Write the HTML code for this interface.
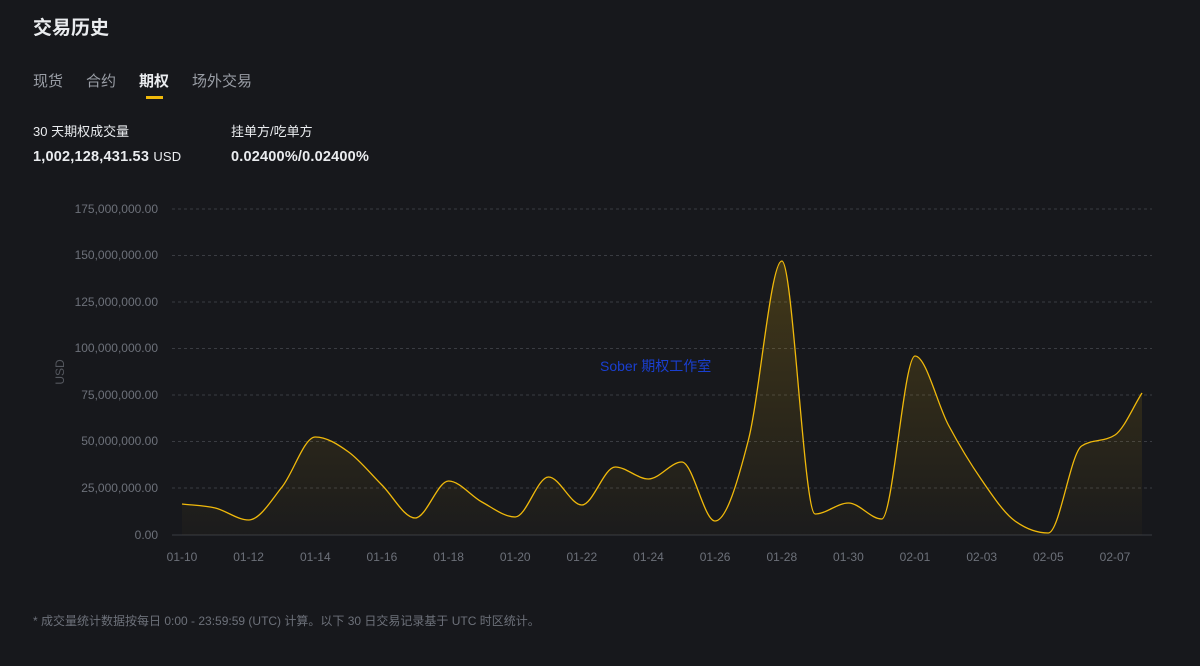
<!DOCTYPE html>
<html><head><meta charset="utf-8"><style>
html,body{margin:0;padding:0;background:#17181c;width:1200px;height:666px;overflow:hidden;font-family:"Liberation Sans","Noto Sans CJK SC",sans-serif;color:#eaecef}
.abs{position:absolute;white-space:nowrap}
</style></head><body>
<div class="abs" style="left:33px;top:13px;font-size:19px;font-weight:bold;color:#eaecef">交易历史</div>
<div class="abs" style="left:33px;top:70px;font-size:15px;color:#9a9ea6">现货</div>
<div class="abs" style="left:86px;top:70px;font-size:15px;color:#9a9ea6">合约</div>
<div class="abs" style="left:139px;top:70px;font-size:15px;color:#eaecef;font-weight:bold">期权</div>
<div class="abs" style="left:146px;top:96px;width:17px;height:3px;background:#f0b90b"></div>
<div class="abs" style="left:192px;top:70px;font-size:15px;color:#9a9ea6">场外交易</div>
<div class="abs" style="left:33px;top:121px;font-size:13px;color:#eaecef">30 天期权成交量</div>
<div class="abs" style="left:231px;top:121px;font-size:13px;color:#eaecef">挂单方/吃单方</div>
<div class="abs" style="left:33px;top:149px;font-size:14.5px;font-weight:bold;letter-spacing:0.2px">1,002,128,431.53 <span style="font-weight:normal;font-size:13px">USD</span></div>
<div class="abs" style="left:231px;top:149px;font-size:14.5px;font-weight:bold;letter-spacing:0.2px">0.02400%/0.02400%</div>
<svg class="abs" style="left:0;top:0" width="1200" height="666" id="c">
<defs><linearGradient id="g" x1="0" y1="0" x2="0" y2="1"><stop offset="0" stop-color="#f0b90b" stop-opacity="0.2"/><stop offset="1" stop-color="#f0b90b" stop-opacity="0.02"/></linearGradient></defs>
<g stroke="#3a3c42" stroke-dasharray="3,3" stroke-width="1">
<line x1="172" x2="1152" y1="209" y2="209"/><line x1="172" x2="1152" y1="255.5" y2="255.5"/><line x1="172" x2="1152" y1="302" y2="302"/><line x1="172" x2="1152" y1="348.5" y2="348.5"/><line x1="172" x2="1152" y1="395" y2="395"/><line x1="172" x2="1152" y1="441.5" y2="441.5"/><line x1="172" x2="1152" y1="488" y2="488"/>
</g>
<line x1="172" x2="1152" y1="535" y2="535" stroke="#3a3c42"/>
<g font-size="12" fill="#6d717a" text-anchor="end" font-family="Liberation Sans,sans-serif">
<text x="158" y="213">175,000,000.00</text><text x="158" y="259">150,000,000.00</text><text x="158" y="306">125,000,000.00</text><text x="158" y="352">100,000,000.00</text><text x="158" y="399">75,000,000.00</text><text x="158" y="445">50,000,000.00</text><text x="158" y="492">25,000,000.00</text><text x="158" y="539">0.00</text>
</g>
<text transform="translate(64,372) rotate(-90)" font-size="12" fill="#55585f" text-anchor="middle">USD</text>
<g font-size="12" fill="#6d717a" text-anchor="middle" id="xl"></g>
<path id="area" fill="url(#g)"/>
<path id="line" fill="none" stroke="#f0b90b" stroke-width="1.3"/>
<text x="600" y="371" font-size="14" fill="#1a3fd0">Sober 期权工作室</text>
</svg>
<div class="abs" style="left:33px;top:612px;font-size:12px;color:#6d717a">* 成交量统计数据按每日 0:00 - 23:59:59 (UTC) 计算。以下 30 日交易记录基于 UTC 时区统计。</div>
<script>
var ys=[504,508,520,487,437,452,485,518,481,502,517,477,505,467,479,462,521,440,261,514,503,519,356,425,480,521,533,446,435,393];
var n=ys.length,xs=ys.map(function(y,i){return i<n-1?182+i*33.32:1142});
var m=[],s=[];
for(var i=0;i<n-1;i++)s.push((ys[i+1]-ys[i])/(xs[i+1]-xs[i]));
for(var i=0;i<n;i++){
 if(i==0)m.push(s[0]);else if(i==n-1)m.push(s[n-2]);
 else if(s[i-1]*s[i]<=0)m.push(0);
 else{var h0=xs[i]-xs[i-1],h1=xs[i+1]-xs[i];var p=(s[i-1]*h1+s[i]*h0)/(h0+h1);
 m.push((Math.sign(s[i-1])+Math.sign(s[i]))*Math.min(Math.abs(s[i-1]),Math.abs(s[i]),0.5*Math.abs(p)));}
}
var d="M"+xs[0]+","+ys[0];
for(var i=0;i<n-1;i++){var h=(xs[i+1]-xs[i])/3;
d+=" C"+(xs[i]+h).toFixed(1)+","+(ys[i]+m[i]*h).toFixed(1)+" "+(xs[i+1]-h).toFixed(1)+","+(ys[i+1]-m[i+1]*h).toFixed(1)+" "+xs[i+1].toFixed(1)+","+ys[i+1];}
document.getElementById("line").setAttribute("d",d);
document.getElementById("area").setAttribute("d",d+" L"+xs[n-1]+",535 L182,535Z");
var lab=["01-10","01-12","01-14","01-16","01-18","01-20","01-22","01-24","01-26","01-28","01-30","02-01","02-03","02-05","02-07"],hh="";
lab.forEach(function(l,k){hh+='<text x="'+(182+k*2*33.32).toFixed(1)+'" y="561">'+l+'</text>'});
document.getElementById("xl").innerHTML=hh;
</script>
</body></html>
